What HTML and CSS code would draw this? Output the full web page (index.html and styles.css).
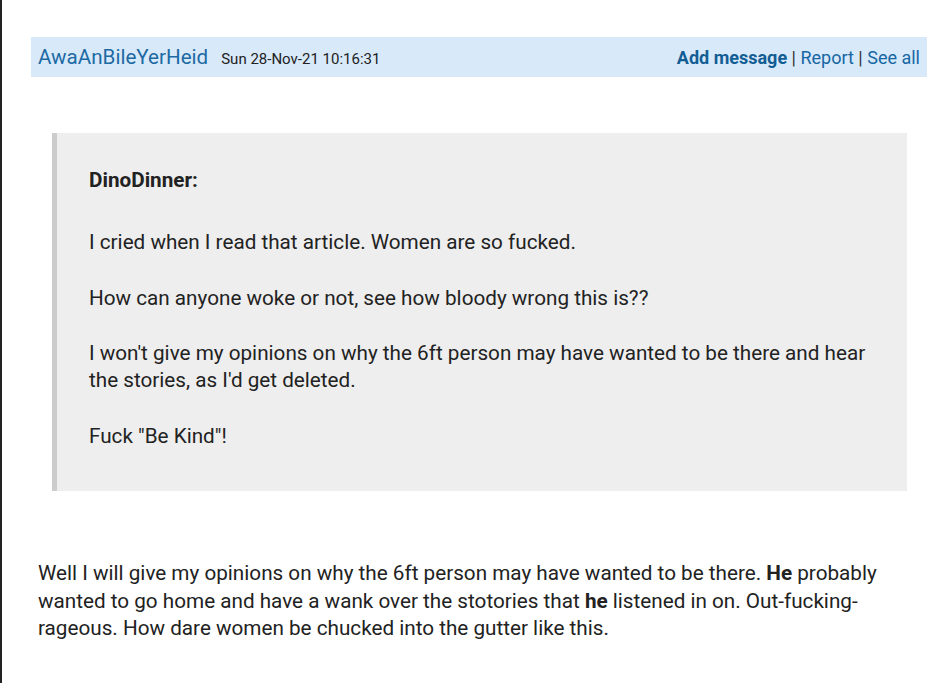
FILE: index.html
```html
<!DOCTYPE html>
<html>
<head>
<meta charset="utf-8">
<link rel="stylesheet" href="styles.css">
</head>
<body>
<div class="page">
  <div class="post-header">
    <div class="who">
      <a class="user">AwaAnBileYerHeid</a>
      <span class="date">Sun 28-Nov-21 10:16:31</span>
    </div>
    <div class="actions">
      <a class="add">Add message</a> | <a>Report</a> | <a>See all</a>
    </div>
  </div>
  <div class="post-body">
    <blockquote class="quote">
      <p class="quoted-name">DinoDinner:</p>
      <p>I cried when I read that article. Women are so fucked.</p>
      <p>How can anyone woke or not, see how bloody wrong this is??</p>
      <p>I won't give my opinions on why the 6ft person may have wanted to be there and hear the stories, as I'd get deleted.</p>
      <p>Fuck "Be Kind"!</p>
    </blockquote>
    <p class="text">Well I will give my opinions on why the 6ft person may have wanted to be there. <b>He</b> probably wanted to go home and have a wank over the stotories that <b>he</b> listened in on. Out-fucking-rageous. How dare women be chucked into the gutter like this.</p>
  </div>
</div>
</body>
</html>
```
FILE: styles.css
```css
html, body {
  margin: 0;
  padding: 0;
  background: #fff;
}
body {
  font-family: Roboto, "Liberation Sans", sans-serif;
  color: #222;
}
.page {
  border-left: 2px solid #222;
  min-height: 683px;
  box-sizing: border-box;
  padding: 37px 9px 0 29px;
}
.post-header {
  background: #d8e9fa;
  height: 40px;
  display: flex;
  align-items: center;
  justify-content: space-between;
  padding: 0 7px;
}
.who {
  display: flex;
  align-items: baseline;
  gap: 13px;
}
.user {
  color: #1d6aa3;
  font-size: 20.6px;
}
.date {
  font-size: 15px;
  color: #222;
}
.actions {
  font-size: 18px;
  color: #333;
}
.actions a {
  color: #1667a3;
}
.actions .add {
  font-weight: bold;
  color: #125d93;
}
.post-body {
  padding: 56px 7px 0 7px;
}
.quote {
  margin: 0 13px 0 14px;
  background: #eeeeee;
  border-left: 5px solid #cccccc;
  padding: 34px 32px 41px 32px;
  font-size: 20.7px;
  line-height: 27px;
}
.quote p {
  margin: 28.7px 0 0 0;
}
.quote .quoted-name {
  margin: 0 0 35px 0;
  font-weight: bold;
}
.quote .quoted-name + p {
  margin-top: 0;
}
.text {
  margin: 69px 0 0 0;
  font-size: 20.7px;
  line-height: 27.5px;
}
```
